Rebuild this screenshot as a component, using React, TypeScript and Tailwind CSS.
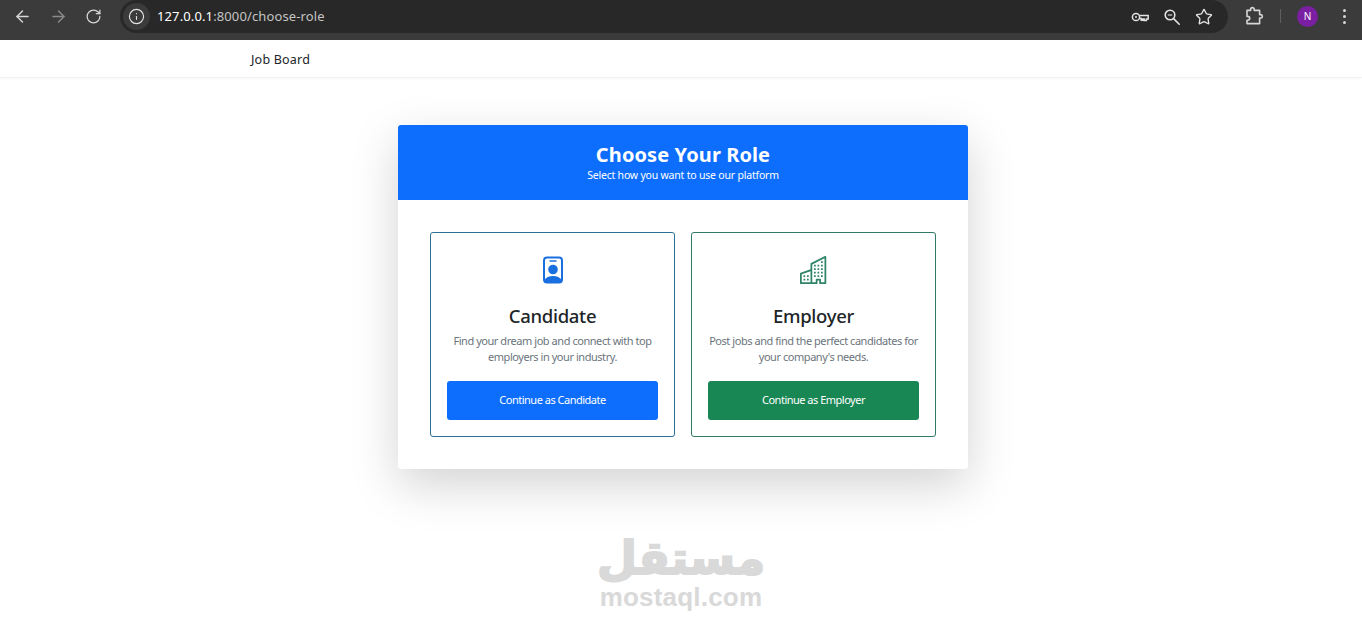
import { ArrowLeft, ArrowRight, RotateCw, Info, Star } from 'lucide-react'
import { BsBuildings } from 'react-icons/bs'

const sans = '[font-family:"Noto_Sans",sans-serif]'

function KeyIcon() {
  return (
    <svg width="18" height="18" viewBox="0 0 18 18" fill="none" stroke="#e3e3e3" strokeWidth="1.5">
      <circle cx="5" cy="9" r="3.6" />
      <circle cx="5" cy="9" r="1" fill="#e3e3e3" stroke="none" />
      <path d="M8.6 7.4h8.6v3.6h-1.8v1.4h-2.2v-1.4h-1.4v1.2h-1.6v-1.6H8.6" />
    </svg>
  )
}

function MagnifierIcon() {
  return (
    <svg width="18" height="18" viewBox="0 0 18 18" fill="none" stroke="#e3e3e3" strokeWidth="1.6">
      <circle cx="7" cy="7" r="4.8" />
      <path d="M4.8 7h4.4" strokeWidth="1.1" />
      <path d="M10.6 10.6l5.6 5.6" strokeLinecap="round" />
    </svg>
  )
}

function PuzzleIcon() {
  return (
    <svg width="20" height="20" viewBox="0 0 20 20" fill="none" stroke="#d6d6d6" strokeWidth="1.6">
      <path d="M3 4.4h3.6V3.4a1.8 1.8 0 0 1 3.6 0v1h5.4v4.2h1.1a1.7 1.7 0 0 1 0 3.4h-1.1v5.6H3v-3.4h.8a1.9 1.9 0 0 0 0-3.8H3z" strokeLinejoin="round" />
    </svg>
  )
}

function BadgeIcon() {
  return (
    <svg width="22" height="28" viewBox="0 0 22 28" className="block">
      <rect x="2" y="1.5" width="18" height="25" rx="3" fill="none" stroke="#1a6fe0" strokeWidth="2" />
      <path d="M8 5h6" stroke="#1a6fe0" strokeWidth="1.5" strokeLinecap="round" />
      <circle cx="11" cy="13.5" r="4.8" fill="#1a6fe0" />
      <path d="M2 24.5c2-3.4 5-4.6 9-4.6s7 1.2 9 4.6v.5a2 2 0 0 1-2 2H4a2 2 0 0 1-2-2z" fill="#1a6fe0" />
    </svg>
  )
}

function RoleCard({ icon, title, desc, button, btnClass, borderClass }: {
  icon: React.ReactNode
  title: string
  desc: string[]
  button: string
  btnClass: string
  borderClass: string
}) {
  return (
    <div className={`flex-1 h-[205px] border rounded-[3px] px-4 pt-[22px] flex flex-col items-center ${borderClass}`}>
      <div className="h-[30px] flex items-center justify-center">{icon}</div>
      <h3 className="mt-[18px] text-[18.5px] leading-[26px] font-medium text-[#212529] tracking-[-0.3px]">{title}</h3>
      <p className="mt-[4px] text-[11px] leading-[16px] text-[#6c757d] text-center tracking-[-0.45px] whitespace-nowrap">
        {desc[0]}
        <br />
        {desc[1]}
      </p>
      <button className={`mt-[16px] w-full h-[39px] rounded-[3px] text-white text-[11px] tracking-[-0.5px] ${btnClass}`}>{button}</button>
    </div>
  )
}

export default function App() {
  return (
    <div className={`w-[1362px] h-[624px] overflow-hidden bg-white ${sans}`}>
      {/* Browser toolbar */}
      <div className="h-10 bg-[#3b3b3b] flex items-start">
        <div className="w-[120px] h-8 flex items-center pl-[13px] gap-[17px]">
          <ArrowLeft size={19} color="#d6d6d6" strokeWidth={1.8} />
          <ArrowRight size={19} color="#8a8a8a" strokeWidth={1.8} />
          <RotateCw size={17} color="#d6d6d6" strokeWidth={1.8} />
        </div>
        <div className="w-[1108px] h-[33px] rounded-full bg-[#282828] flex items-center">
          <div className="ml-[3px] w-[27px] h-[27px] rounded-full bg-[#3b3b3b] flex items-center justify-center">
            <Info size={17} color="#e3e3e3" strokeWidth={1.6} />
          </div>
          <span className="ml-[7px] text-[13px] tracking-[0.12px] text-white">
            127.0.0.1<span className="text-[#c4c4c4]">:8000/choose-role</span>
          </span>
          <div className="ml-auto flex items-center gap-[14px] pr-[15px]">
            <KeyIcon />
            <MagnifierIcon />
            <Star size={18} color="#e3e3e3" strokeWidth={1.8} />
          </div>
        </div>
        <div className="flex-1 h-8 flex items-center pl-[16px]">
          <PuzzleIcon />
          <div className="ml-[16px] w-px h-[14px] bg-[#5f5f5f]" />
          <div className="ml-[16px] w-[21px] h-[21px] rounded-full bg-[#7b1fa2] text-white text-[10px] flex items-center justify-center">N</div>
          <div className="ml-[25px] flex flex-col gap-[3px]">
            <span className="w-[3px] h-[3px] rounded-full bg-[#d6d6d6]" />
            <span className="w-[3px] h-[3px] rounded-full bg-[#d6d6d6]" />
            <span className="w-[3px] h-[3px] rounded-full bg-[#d6d6d6]" />
          </div>
        </div>
      </div>

      {/* Navbar */}
      <nav className="h-[38px] bg-white border-b border-[#f1f1f1] shadow-[0_1px_2px_rgba(0,0,0,0.03)] flex items-center pl-[251px] pt-[3px]">
        <span className="text-[12.5px] tracking-[0.2px] text-[#212529]">Job Board</span>
      </nav>

      {/* Role card */}
      <main className="pt-[47px] flex flex-col items-center">
        <div className="w-[570px] h-[344px] ml-[4px] rounded-[3px] bg-white shadow-[0_16px_48px_rgba(0,0,0,0.175)] overflow-hidden">
          <div className="h-[75px] bg-[#0d6efd] text-white flex flex-col items-center pt-[15px]">
            <h1 className="text-[20px] leading-[29px] font-bold tracking-[0.1px]">Choose Your Role</h1>
            <p className="text-[10.5px] leading-[12px] tracking-[-0.2px]">Select how you want to use our platform</p>
          </div>
          <div className="p-8 flex gap-4">
            <RoleCard
              icon={<BadgeIcon />}
              title="Candidate"
              desc={['Find your dream job and connect with top', 'employers in your industry.']}
              button="Continue as Candidate"
              btnClass="bg-[#0d6efd]"
              borderClass="border-[#2b7196]"
            />
            <RoleCard
              icon={<BsBuildings size={28} color="#2f8566" />}
              title="Employer"
              desc={['Post jobs and find the perfect candidates for', "your company's needs."]}
              button="Continue as Employer"
              btnClass="bg-[#198754]"
              borderClass="border-[#2f7a66]"
            />
          </div>
        </div>

        {/* Watermark */}
        <div className="mt-[64px] flex flex-col items-center text-[#d9d9d9]">
          <span dir="rtl" className="text-[46px] leading-[50px] font-bold [-webkit-text-stroke:2px_#d9d9d9] [font-family:'DejaVu_Sans',sans-serif]">مستقل</span>
          <span className="mt-[2px] text-[26px] leading-[24px] font-bold tracking-[0.2px] [font-family:'Liberation_Sans',sans-serif]">mostaql.com</span>
        </div>
      </main>
    </div>
  )
}
